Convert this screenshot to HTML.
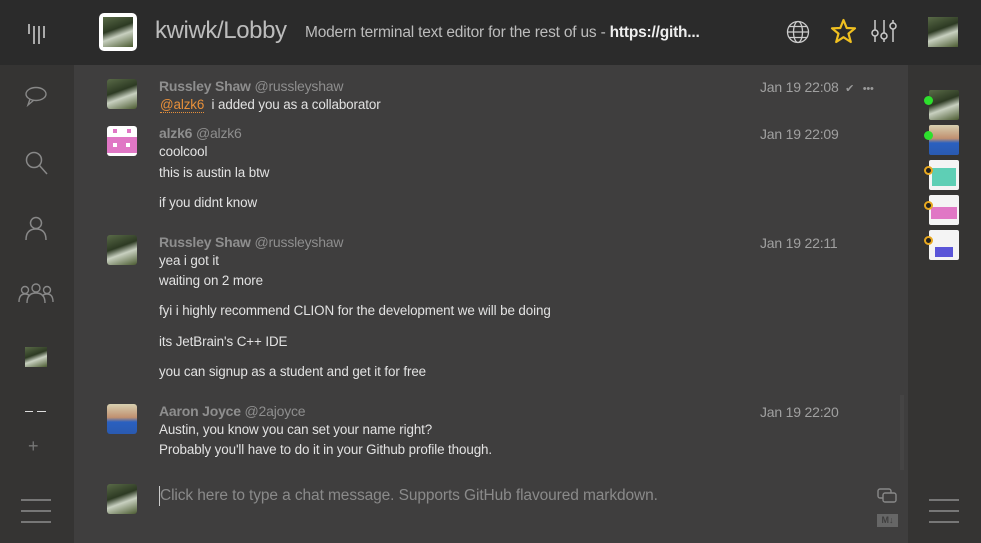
<!DOCTYPE html>
<html><head><meta charset="utf-8"><style>
*{margin:0;padding:0;box-sizing:border-box}
body{width:981px;height:543px;overflow:hidden;background:#3f3e3e;font-family:"Liberation Sans",sans-serif;position:relative}
.a{position:absolute}
.hdr{left:0;top:0;width:981px;height:65px;background:#2b2b2b}
.ls{left:0;top:65px;width:74px;height:478px;background:#353433}
.rs{left:908px;top:65px;width:73px;height:478px;background:#353433}
.t{position:absolute;font-size:13.4px;color:#e2e2e2;white-space:nowrap;letter-spacing:-0.1px}
.n{position:absolute;font-size:14px;font-weight:bold;color:#8e8e8e;white-space:nowrap;letter-spacing:-0.2px}
.n span{font-weight:normal}
.tm{position:absolute;left:760px;font-size:14px;color:#a0a0a0;letter-spacing:-0.2px}
.av{position:absolute;left:107px;width:30px;height:30px;border-radius:3px;background:linear-gradient(160deg,#5a6b48 0%,#2d3a23 40%,#c8d0c0 60%,#4a5a30 100%)}
.ra{position:absolute;left:929px;width:30px;height:30px;border-radius:2px}
.dot{position:absolute;left:924px;width:9px;height:9px;border-radius:50%}
.hb{position:absolute;width:30px;height:2px;background:#777}
</style></head><body>
<div class="a hdr"></div>
<div class="a ls"></div>
<div class="a rs"></div>
<svg class="a" style="left:26px;top:22px" width="20" height="24"><g stroke="#aaa" stroke-width="2"><line x1="3" y1="2" x2="3" y2="12"/><line x1="8" y1="4" x2="8" y2="22"/><line x1="13" y1="4" x2="13" y2="22"/><line x1="18" y1="4" x2="18" y2="16"/></g></svg>
<div class="a" style="left:99px;top:13px;width:38px;height:38px;background:#fff;border-radius:5px"></div>
<div class="a" style="left:103px;top:17px;width:30px;height:30px;background:linear-gradient(160deg,#5a6b48,#2d3a23 40%,#c8d0c0 60%,#4a5a30)"></div>
<div class="a" style="left:155px;top:17px;font-size:24px;color:#bcbcbc;letter-spacing:-0.4px">kwiwk/Lobby</div>
<div class="a" style="left:305px;top:24px;font-size:15.5px;color:#bcbcbc;white-space:nowrap;letter-spacing:-0.2px">Modern terminal text editor for the rest of us - <b style="color:#eee">https://gith...</b></div>
<svg class="a" style="left:786px;top:20px" width="24" height="24" fill="none" stroke="#ccc" stroke-width="1.3"><circle cx="12" cy="12" r="10.5"/><ellipse cx="12" cy="12" rx="4.5" ry="10.5"/><line x1="1.5" y1="12" x2="22.5" y2="12"/><line x1="3" y1="6.5" x2="21" y2="6.5"/><line x1="3" y1="17.5" x2="21" y2="17.5"/></svg>
<svg class="a" style="left:830px;top:18px" width="27" height="26"><polygon points="13.5,2 16.7,10 25,10.3 18.5,15.6 20.8,24 13.5,19.2 6.2,24 8.5,15.6 2,10.3 10.3,10" fill="none" stroke="#f0c020" stroke-width="2.2" stroke-linejoin="round"/></svg>
<svg class="a" style="left:870px;top:19px" width="28" height="24" fill="none" stroke="#ccc" stroke-width="1.5"><line x1="5" y1="1" x2="5" y2="23"/><line x1="14" y1="1" x2="14" y2="23"/><line x1="23" y1="1" x2="23" y2="23"/><circle cx="5" cy="14" r="3" fill="#2b2b2b"/><circle cx="14" cy="17" r="3" fill="#2b2b2b"/><circle cx="23" cy="7" r="3" fill="#2b2b2b"/></svg>
<div class="a" style="left:928px;top:17px;width:30px;height:30px;background:linear-gradient(160deg,#5a6b48,#2d3a23 40%,#c8d0c0 60%,#4a5a30)"></div>
<svg class="a" style="left:24px;top:85px" width="24" height="22" fill="none" stroke="#888" stroke-width="1.4"><ellipse cx="12" cy="9" rx="10" ry="6.5"/><path d="M6 14 L4 20 L10 15"/></svg>
<svg class="a" style="left:24px;top:150px" width="24" height="26" fill="none" stroke="#888" stroke-width="1.5"><circle cx="10" cy="10" r="7.5"/><line x1="15.5" y1="15.5" x2="23" y2="24"/></svg>
<svg class="a" style="left:24px;top:215px" width="24" height="26" fill="none" stroke="#888" stroke-width="1.5"><circle cx="12" cy="8" r="5.5"/><path d="M2 25 Q2 14 12 14 Q22 14 22 25"/></svg>
<svg class="a" style="left:18px;top:282px" width="36" height="22" fill="none" stroke="#888" stroke-width="1.4"><circle cx="18" cy="6" r="4"/><path d="M9 21 Q9 11 18 11 Q27 11 27 21"/><circle cx="7" cy="8" r="3.5"/><path d="M1 20 Q1 12 7 12 Q10 12 12 14"/><circle cx="29" cy="8" r="3.5"/><path d="M35 20 Q35 12 29 12 Q26 12 24 14"/></svg>
<div class="a" style="left:25px;top:347px;width:22px;height:20px;background:linear-gradient(160deg,#5a6b48,#2d3a23 40%,#c8d0c0 60%,#4a5a30)"></div>
<div class="a" style="left:25px;top:411px;width:8px;height:1px;background:#ddd"></div><div class="a" style="left:37px;top:411px;width:9px;height:1px;background:#ddd"></div>
<div class="a" style="left:28px;top:436px;font-size:18px;color:#777">+</div>
<div class="hb" style="left:21px;top:499px"></div><div class="hb" style="left:21px;top:510px"></div><div class="hb" style="left:21px;top:521px"></div>
<div class="hb" style="left:929px;top:499px"></div><div class="hb" style="left:929px;top:510px"></div><div class="hb" style="left:929px;top:521px"></div>
<div class="av" style="top:79px"></div>
<div class="n" style="left:159px;top:78px">Russley Shaw <span>@russleyshaw</span></div>
<div class="t" style="left:160px;top:97px"><span style="color:#e8903a;border-bottom:1px dotted #e8903a">@alzk6</span>&nbsp; i added you as a collaborator</div>
<div class="tm" style="top:79px">Jan 19 22:08 <span style="font-size:11px;color:#999">&nbsp;✔ &nbsp;&nbsp;•••</span></div>
<div class="av" style="top:126px;background:#fff"></div>
<div class="a" style="left:107px;top:137px;width:30px;height:16px;background:#e077c5"></div>
<div class="a" style="left:113px;top:129px;width:4px;height:4px;background:#e077c5"></div><div class="a" style="left:127px;top:129px;width:4px;height:4px;background:#e077c5"></div>
<div class="a" style="left:113px;top:143px;width:4px;height:4px;background:#fff"></div><div class="a" style="left:126px;top:143px;width:4px;height:4px;background:#fff"></div>
<div class="n" style="left:159px;top:125px">alzk6 <span>@alzk6</span></div>
<div class="tm" style="top:126px">Jan 19 22:09</div>
<div class="t" style="left:159px;top:144px">coolcool</div>
<div class="t" style="left:159px;top:165px">this is austin la btw</div>
<div class="t" style="left:159px;top:195px">if you didnt know</div>
<div class="av" style="top:235px"></div>
<div class="n" style="left:159px;top:234px">Russley Shaw <span>@russleyshaw</span></div>
<div class="tm" style="top:235px">Jan 19 22:11</div>
<div class="t" style="left:159px;top:253px">yea i got it</div>
<div class="t" style="left:159px;top:273px">waiting on 2 more</div>
<div class="t" style="left:159px;top:303px">fyi i highly recommend CLION for the development we will be doing</div>
<div class="t" style="left:159px;top:334px">its JetBrain's C++ IDE</div>
<div class="t" style="left:159px;top:364px">you can signup as a student and get it for free</div>
<div class="av" style="top:404px;background:linear-gradient(180deg,#d8d0b0 0%,#c09070 45%,#2a60c0 60%,#2a5ab0 100%)"></div>
<div class="n" style="left:159px;top:403px">Aaron Joyce <span>@2ajoyce</span></div>
<div class="tm" style="top:404px">Jan 19 22:20</div>
<div class="t" style="left:159px;top:422px">Austin, you know you can set your name right?</div>
<div class="t" style="left:159px;top:442px">Probably you'll have to do it in your Github profile though.</div>
<div class="a" style="left:900px;top:395px;width:4px;height:75px;background:#454444"></div>
<div class="av" style="top:484px"></div>
<div class="a" style="left:159px;top:486px;width:1px;height:20px;background:#ccc"></div>
<div class="a" style="left:160px;top:487px;font-size:15.5px;color:#8a8a8a;white-space:nowrap;letter-spacing:-0.1px">Click here to type a chat message. Supports GitHub flavoured markdown.</div>
<svg class="a" style="left:876px;top:487px" width="22" height="18" fill="none" stroke="#888" stroke-width="1.4"><rect x="2" y="2" width="13" height="9" rx="2"/><rect x="7" y="6" width="13" height="9" rx="2" fill="#3f3e3e"/></svg>
<div class="a" style="left:877px;top:514px;width:21px;height:13px;background:#666;color:#3f3e3e;font-size:9px;font-weight:bold;text-align:center;line-height:13px">M↓</div>
<div class="ra" style="top:90px;background:linear-gradient(160deg,#5a6b48,#2d3a23 40%,#c8d0c0 60%,#4a5a30)"></div>
<div class="ra" style="top:125px;background:linear-gradient(180deg,#d8d0b0 0%,#c09070 45%,#2a60c0 60%,#2a5ab0 100%)"></div>
<div class="ra" style="top:160px;background:#f4f4f4"></div><div class="a" style="left:932px;top:168px;width:24px;height:18px;background:#5ecfb5"></div>
<div class="ra" style="top:195px;background:#f4f4f4"></div><div class="a" style="left:931px;top:207px;width:26px;height:12px;background:#e077c5"></div>
<div class="ra" style="top:230px;background:#f4f4f4"></div><div class="a" style="left:935px;top:247px;width:18px;height:10px;background:#5a55d8"></div>
<div class="dot" style="top:96px;background:#2de02d"></div>
<div class="dot" style="top:131px;background:#2de02d"></div>
<div class="dot" style="top:166px;background:#222;border:2px solid #e8a820"></div>
<div class="dot" style="top:201px;background:#222;border:2px solid #e8a820"></div>
<div class="dot" style="top:236px;background:#222;border:2px solid #e8a820"></div>
</body></html>
